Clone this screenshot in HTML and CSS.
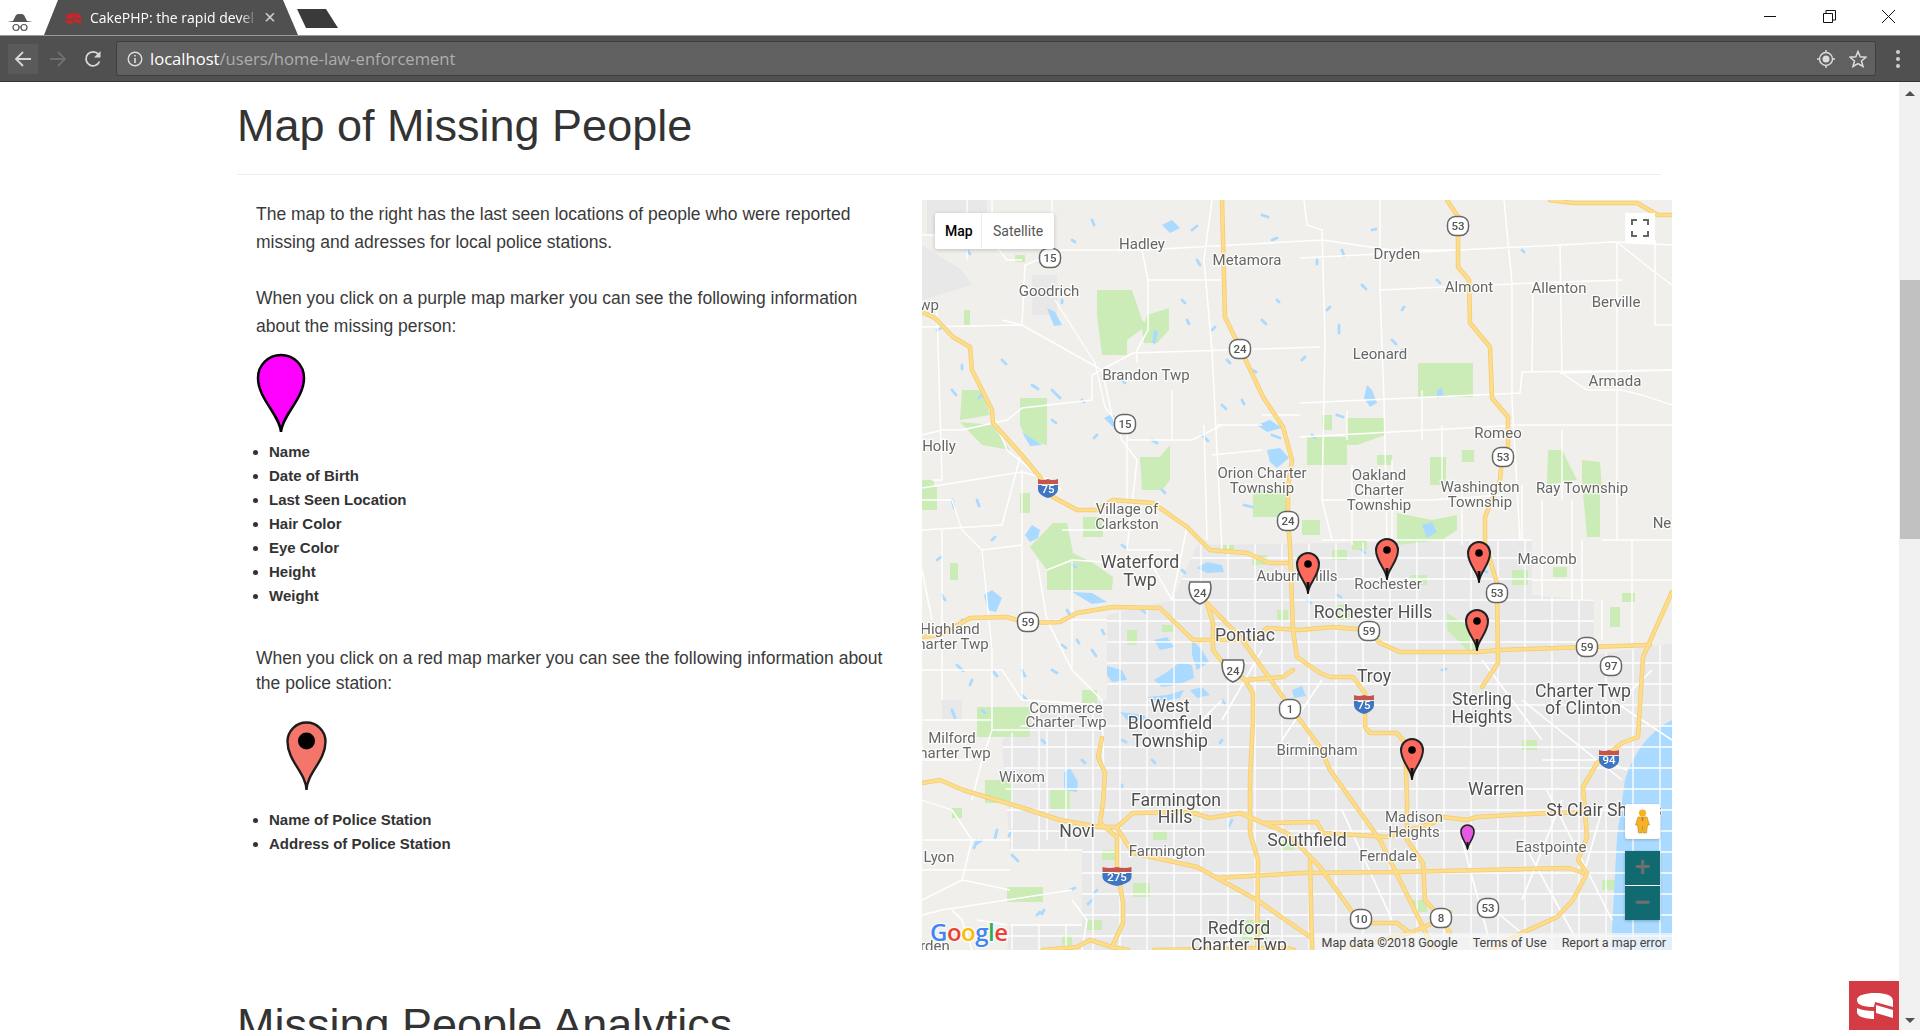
FILE: index.html
```html
<!DOCTYPE html>
<html lang="en">
<head>
  <meta charset="UTF-8" />
  <title>CakePHP: the rapid development php framework</title>
  <link rel="stylesheet" href="styles.css">
</head>
<body>

  <svg class="defs" width="0" height="0">
    <symbol id="cake" viewBox="0 0 50 49">
      <path fill="currentColor" d="M8 19C8 14 17 12 26 12C36 12 44 14 44 20L44 26L26 21L25 26C17 26 8 25 8 19Z"/>
      <path fill="currentColor" d="M27 24L44 29L44 37L27 32Z"/>
      <path fill="currentColor" d="M8 27C12 29 18 30 25 30L25 38C17 38 8 36 8 31Z"/>
    </symbol>
    <symbol id="pin-red" viewBox="0 0 41 70">
      <path fill="#f4756a" stroke="#1c1c1c" stroke-width="2.4" d="M20.5 69C20 52 1.5 40 1.5 20.5A19 19 0 0 1 39.5 20.5C39.5 40 21 52 20.5 69Z"/>
      <circle cx="20.5" cy="20" r="8.5" fill="#000"/>
    </symbol>
    <symbol id="pin-map" viewBox="0 0 24 42">
      <path fill="#fb6a5c" stroke="#222" stroke-width="2" d="M12 41C11.5 31 1 24 1 12A11 11 0 0 1 23 12C23 24 12.500 31 12 41Z"/>
      <path fill="#111" d="M10.500 30L13.500 30L12.800 42L11.200 42Z"/>
      <circle cx="12" cy="12" r="3.800" fill="#000"/>
    </symbol>
    <symbol id="pin-purple" viewBox="0 0 15 26">
      <path fill="#e558e0" stroke="#222" stroke-width="1.600" d="M7.500 25C7 19 1 15 1 7.500A6.500 6.500 0 0 1 14 7.500C14 15 8 19 7.500 25Z"/>
      <path fill="#111" d="M6.500 18L8.500 18L8 26L7 26Z"/>
    </symbol>
  </svg>

  <!-- browser bars -->
  <header class="tabstrip">
    <svg class="incognito" width="30" height="30" viewBox="0 0 30 30">
      <path fill="#555" d="M13 8L17 8L19 9L22 15L28 16L2 16L8 15L11 9Z"/>
      <circle cx="11" cy="21.500" r="3" fill="none" stroke="#555" stroke-width="1.200"/>
      <circle cx="19" cy="21.500" r="3" fill="none" stroke="#555" stroke-width="1.200"/>
      <path stroke="#555" stroke-width="1.200" d="M14 21L16 21"/>
    </svg>
    <div class="tab">
      <svg class="favicon" width="22" height="21"><use href="#cake"/></svg>
      <span class="tab-title">CakePHP: the rapid devel</span>
      <span class="tab-close">×</span>
    </div>
    <div class="newtab"></div>
    <div class="winbtns">
      <svg width="13" height="13" viewBox="0 0 13 13"><path stroke="#111" d="M0 6.500H12"/></svg>
      <svg width="13" height="13" viewBox="0 0 13 13"><path fill="none" stroke="#111" d="M.5 3.500H9.500V12.500H.5ZM3 3.500V.5H12.500V10H9.500"/></svg>
      <svg width="13" height="13" viewBox="0 0 13 13"><path stroke="#111" d="M0 0L13 13M13 0L0 13"/></svg>
    </div>
  </header>

  <nav class="toolbar">
    <div class="navbtn navbtn-on">
      <svg width="18" height="18" viewBox="0 0 18 18"><path fill="none" stroke="#d8d8d8" stroke-width="1.800" d="M17 9H2M9 2L2 9L9 16"/></svg>
    </div>
    <div class="navbtn">
      <svg width="18" height="18" viewBox="0 0 18 18"><path fill="none" stroke="#6f6f6f" stroke-width="1.800" d="M1 9H16M9 2L16 9L9 16"/></svg>
    </div>
    <div class="navbtn">
      <svg width="18" height="18" viewBox="0 0 18 18"><path fill="none" stroke="#d8d8d8" stroke-width="1.800" d="M15.500 11.500A7 7 0 1 1 14.500 4.500"/><path fill="#d8d8d8" d="M16.500 1V7.500H10Z"/></svg>
    </div>
    <div class="addressbar">
      <svg width="16" height="16" viewBox="0 0 16 16"><circle cx="8" cy="8" r="6.800" fill="none" stroke="#ddd" stroke-width="1.400"/><path stroke="#ddd" stroke-width="1.600" d="M8 7V12M8 4V5.600"/></svg>
      <span class="url"><span class="url-host">localhost</span>/users/home-law-enforcement</span>
      <svg class="addr-target" width="18" height="18" viewBox="0 0 18 18"><circle cx="9" cy="9" r="6.500" fill="none" stroke="#ddd" stroke-width="1.400"/><circle cx="9" cy="9" r="3.500" fill="#ddd"/><path stroke="#ddd" stroke-width="1.400" d="M9 0V2.500M9 15.500V18M0 9H2.500M15.500 9H18"/></svg>
      <svg class="addr-star" width="18" height="18" viewBox="0 0 18 18"><path fill="none" stroke="#ddd" stroke-width="1.500" d="M9 1.500L11.200 6.800L17 7.200L12.500 11L14 16.500L9 13.500L4 16.500L5.500 11L1 7.200L6.800 6.800Z"/></svg>
    </div>
    <div class="dots"><i></i><i></i><i></i></div>
  </nav>

  <div class="viewport">
    <main class="page">
      <h1 class="heading">Map of Missing People</h1>

      <div class="map-row">
        <section class="intro">
          <p class="intro-text">The map to the right has the last seen locations of people who were reported missing and adresses for local police stations.</p>
          <p class="intro-text">When you click on a purple map marker you can see the following information about the missing person:</p>
          <svg class="big-pin" width="50" height="80" viewBox="0 0 50 80">
            <path fill="#f0f" stroke="#000" stroke-width="2.500" d="M25 79C24 62 2 46 2 25A23 23 0 0 1 48 25C48 46 26 62 25 79Z"/>
          </svg>
          <ul class="fields">
            <li>Name</li>
            <li>Date of Birth</li>
            <li>Last Seen Location</li>
            <li>Hair Color</li>
            <li>Eye Color</li>
            <li>Height</li>
            <li>Weight</li>
          </ul>
          <p class="intro-text intro-police">When you click on a red map marker you can see the following information about the police station:</p>
          <svg class="red-pin" width="41" height="70"><use href="#pin-red"/></svg>
          <ul class="fields">
            <li>Name of Police Station</li>
            <li>Address of Police Station</li>
          </ul>
        </section>

        <div class="map">
          <svg class="map-canvas" width="750" height="750" viewBox="0 0 750 750">
            <defs>
              <pattern id="streets" width="27" height="21" patternUnits="userSpaceOnUse">
                <path d="M0 1H27M9 0V21" stroke="#fff" stroke-width="1.300" fill="none"/>
              </pattern>
              <clipPath id="urban-clip"><path d="M275 345L610 340L610 395L672 400L672 455L750 443L750 750L85 750L88 725L160 725L160 650L88 650L85 610L80 540L120 510L185 500L185 415L250 400Z"/></clipPath>
              <g id="st"><rect x="-10.500" y="-9.500" width="21" height="19" rx="8" fill="#fff" stroke="#666" stroke-width="1.500"/></g>
              <g id="us"><path fill="#fff" stroke="#666" stroke-width="1.500" d="M-10 -11H10L11 -7C11 2 8 8 0 11C-8 8 -11 2 -11 -7Z"/></g>
              <g id="i">
                <path fill="#c4544e" d="M-10 -8Q-5 -6 0 -8Q5 -6 10 -8V-3H-10Z"/>
                <path fill="#3f76c4" d="M-10 -2H10V2C10 7 4 10 0 11C-4 10 -10 7 -10 2Z"/>
              </g>
              <g id="hw" fill="none" stroke-linejoin="round" stroke-linecap="round">
                <path d="M0 112L13 118L31 137L48 147L50 170L70 210L71 223L98 253L118 277L131 297L155 310L175 310L191 300L231 303L265 327L288 350L325 353L348 363L365 363"/>
                <path d="M300 0L303 117L318 148L341 197L361 227L370 260L366 287L366 320L368 347L371 430L375 457L398 473L408 477L431 477L443 493L443 527L448 533L475 533L483 543L485 600L485 640L501 663L503 700L518 717L528 733"/>
                <path d="M525 0L536 17L536 67L547 80L548 123L568 147L570 198L586 217L586 247L580 257L578 280L563 317L563 343L575 383L576 463L560 487"/>
                <path d="M628 0L651 3L715 3L736 15L750 15"/>
                <path d="M0 437L18 435L48 418L85 417L105 423L138 422L155 413L191 407L238 408L271 440L331 440L345 428L378 430L411 427L445 430L458 443L478 452L555 452L578 450L665 447L728 445"/>
                <path d="M750 392L721 457L716 537L700 543L675 563L661 587L665 637L656 660L665 673L651 700L635 717L591 737L570 750"/>
                <path d="M378 673L478 672L647 668L661 673"/>
                <path d="M295 678L378 673"/>
                <path d="M521 617L545 620L555 617L625 613L663 612"/>
                <path d="M285 403L318 437L361 497L398 547L408 570L458 640L501 727L512 750"/>
                <path d="M285 403L291 423L291 450L301 463L323 480L331 493L331 520L328 580L328 633L336 660L335 750"/>
                <path d="M323 480L361 477L371 470"/>
                <path d="M0 583L18 580L41 590L98 607L138 620L178 627L195 627L211 613L268 612L288 618L318 613L341 623L395 622L401 633L465 637L511 623L521 617"/>
                <path d="M180 538L176 557L183 573L181 603L178 623L195 637L195 667L201 703L201 723L190 747"/>
                <path d="M195 628L211 653L275 667L335 700L388 737"/>
                <path d="M318 613L365 633L398 667L431 713"/>
                <path d="M388 660L390 750"/>
                <path d="M121 750L155 747L168 740L190 747L206 750"/>
                <path d="M232 750L365 748L372 750"/>
                <path d="M448 723L475 723L488 733L511 723L528 712"/>
                <path d="M420 750L488 733"/>
              </g>
            </defs>

            <rect width="750" height="750" fill="#f0efeb"/>
            <path fill="#e8e8e8" d="M275 345L610 340L610 395L672 400L672 455L750 443L750 750L85 750L88 725L160 725L160 650L88 650L85 610L80 540L120 510L185 500L185 415L250 400Z"/>
            <path fill="#e8e8e8" d="M5 0H65V35H5ZM0 45L40 70L50 85L0 100ZM110 75H135V115H110ZM20 500H40V520H20Z"/>

            <!-- parks -->
            <g fill="#cbebb7">
              <path d="M175 90L210 90L220 120L225 125L205 140L205 155L180 155L175 115Z"/>
              <path d="M225 115L247 108L247 130L235 143L222 143L220 130Z"/>
              <path d="M98 198L125 198L125 245L105 240L98 225Z"/>
              <path d="M40 190L60 190L68 215L38 220Z"/>
              <path d="M38 222L70 225L88 250L60 245Z"/>
              <path d="M218 257L238 257L248 245L248 280L240 290L220 290Z"/>
              <path d="M42 110H48V125H42ZM0 280H12V295H0ZM93 55H103V62H93Z"/>
              <path d="M496 163H551V197H496Z"/>
              <path d="M385 237L425 237L425 265L385 265Z"/>
              <path d="M425 218L463 218L463 235L435 245L425 245Z"/>
              <path d="M508 257H524V285H508ZM626 250L640 250L655 280L625 285ZM661 293H678V337H665Z"/>
              <path d="M108 347L131 323L145 323L151 353L171 363L191 377L190 390L125 390L125 370Z"/>
              <path d="M161 317H181V337H161ZM331 290H365V317H331ZM28 363H36V380H28ZM98 293H108V313H98ZM0 287H15V310H0Z"/>
              <path d="M55 507H108V537H80L55 537Z"/>
              <path d="M475 313L510 320L535 315L535 330L520 340L475 345Z"/>
              <path d="M688 407H698V427H688ZM700 393H713V402H700ZM631 367H645V377H631ZM525 413L545 425L555 450L545 450L525 430Z"/>
              <path d="M63 580H91V603H63ZM128 590H148V610H128ZM85 687H121V702H85ZM30 608H40V618H30ZM211 683H228V697H211ZM231 630H245V640H231Z"/>
              <path d="M413 405H428V420H413ZM488 375H505V385H488ZM590 370H606V385H590ZM430 340H445V350H430ZM600 540H615V550H600ZM360 640H373V650H360ZM490 700H505V712H490ZM320 720H345V740H320ZM180 650H195V660H180ZM165 720H180V730H165Z"/>
              <path d="M660 260L678 262L680 290L660 285ZM720 720H735V735H720ZM680 680H695V690H680ZM140 735H150V745H140Z"/>
              <path d="M380 320H398V335H380ZM410 350H425V360H410ZM355 410H366V420H355ZM330 355H345V365H330ZM300 345H312V352H300ZM240 425H252V432H240ZM205 430H215V445H205ZM160 490H175V503H160ZM540 250H552V262H540ZM455 255H470V265H455ZM400 215H410V230H400Z"/>
            </g>

            <!-- water -->
            <g fill="#aadaff">
              <path d="M750 520C730 530 712 550 703 580L695 637L690 730L690 750L750 750Z"/>
              <path d="M103 335L110 325L118 330L116 338L108 342Z"/>
              <path d="M62 395L70 390L80 398L74 412L66 410Z"/>
              <path d="M185 466L200 470L205 480L190 482L185 475Z"/>
              <path d="M232 480L245 472L258 462L270 465L272 478L255 485L240 487Z"/>
              <path d="M232 440L245 437L252 447L238 450Z"/>
              <path d="M270 440L280 450L287 462L275 470L270 455Z"/>
              <path d="M275 368L285 362L300 365L302 372L285 373Z"/>
              <path d="M150 392L170 393L185 402L170 404Z"/>
              <path d="M268 490L280 487L288 495L275 498Z"/>
              <path d="M225 497L245 495L262 490L258 498L235 502Z"/>
              <path d="M198 512L222 515L225 520L205 520Z"/>
              <path d="M142 572L148 568L156 582L155 592L142 590Z"/>
              <path d="M345 250L358 248L367 258L355 268L348 262Z"/>
              <path d="M500 325L510 322L515 332L505 338Z"/>
              <path d="M445 185L450 190L455 203L448 207L442 198Z"/>
              <path d="M125 108L133 112L140 125L132 126Z"/>
              <path d="M240 25L250 20L258 28L248 33Z"/>
              <path d="M232 130L236 132L233 145L230 142Z"/>
              <path d="M182 218L190 214L198 222L192 228Z"/>
              <path d="M335 225L348 220L360 228L345 232Z"/>
              <path d="M100 232L112 240L120 245L108 246Z"/>
              <path d="M370 490L380 486L384 496L372 498Z"/>
              <path d="M515 190L520 188L522 196L515 198Z"/>
            </g>
            <path fill="none" stroke="#aadaff" stroke-width="2.800" stroke-linecap="round" d="M170 20l2 5M270 30l5 -4M275 60l3 5M340 15l6 2M380 160l3 -3M405 110l3 -3M417 125l0 8M440 85l4 4M470 140l4 4M480 150l2 6M40 165l0 4M30 190l4 5M15 130l4 -2M60 195l-3 3M80 160l4 4M110 185l6 4M130 190l8 8M140 100l0 3M200 180l3 3M160 200l2 2M130 220l4 3M175 235l-3 3M230 240l5 3M280 235l6 6M300 205l4 4M320 200l2 4M350 235l8 3M340 120l4 4M355 100l2 2M395 60l0 4M415 215l6 2M390 235l3 3M30 300l2 8M55 300l2 6M70 340l3 -3M15 360l4 -3M20 395l3 5M40 420l0 4M35 465l6 6M70 470l5 6M100 470l3 6M100 495l4 4M30 510l3 8M130 470l5 3M170 450l4 6M155 440l2 3M145 410l3 5M150 365l4 2M130 420l3 3M220 410l4 3M200 345l4 3M260 370l3 3M322 305l8 2M385 400l4 3M415 395l4 2M440 350l3 3M560 370l5 2M552 450l3 3M640 650l5 3M90 630l-3 6M75 630l-2 8M60 640l-6 4M55 640l-3 8M90 655l6 6M115 715l3 -3M122 710l-2 4M148 690l5 -2M170 700l-4 4M175 690l-3 3M200 585l0 3M310 620l-3 6M520 470l4 -1M240 290l3 3M45 50l3 4M90 20l2 5M150 40l3 2M260 100l3 3M265 120l2 4M290 130l3 -3M305 160l3 3M330 170l4 2M350 40l5 -2M420 50l2 6M450 30l4 -1M480 110l2 -3M515 80l3 3M600 50l2 2M140 445l4 3M180 430l2 4M50 480l-2 5M60 510l3 3M120 540l3 3M200 540l4 2M160 560l3 3M230 560l3 3M270 540l4 -2M300 500l3 4M300 540l-2 3"/>

            <!-- streets -->
            <rect width="750" height="750" fill="url(#streets)" clip-path="url(#urban-clip)"/>
            <path fill="none" stroke="#fff" stroke-width="1.500" d="M0 127L100 125L103 65L140 50L220 50L400 40L470 50L540 50M220 50L226 80L226 130L215 150L215 163M290 0L282 60L290 150L300 350M382 0L385 25L400 30L403 140L400 300L410 340M458 0L458 90L462 200L465 340M378 58L638 45L691 42L750 45M458 90L611 83L700 80M638 45L640 173M582 0L590 83L590 200L598 340M638 173L750 170M611 83L610 172M695 42L695 340M733 40L733 125L750 125M378 203L598 193L600 172L750 170M378 237L598 225L750 225M211 153L398 147M211 153L170 175L170 200L100 208L85 220L40 230L20 230L0 235M0 330L80 325L100 250M80 120L100 125L180 170L190 215L200 240L215 260L205 350M226 80L300 80M205 240L270 240L300 225M282 225L285 340M290 255L340 250M0 288L100 272L130 280M15 110L20 280L10 280M50 165L85 250L118 277L140 290M400 300L510 300L580 295M0 370L10 420M0 470L80 470L100 500L180 505M70 450L70 530L180 530M115 360L125 420L150 470L180 500M250 400L230 365L150 360L125 370M265 327L250 400M180 500L182 580M70 530L60 560L50 600M0 640L88 640M30 610L50 640L40 680L88 690M40 680L0 700M150 690L85 700L20 710L0 715M150 700L165 720L160 750M30 710L40 720L50 750"/>
            <path fill="none" stroke="#fff" stroke-width="1.300" d="M45 0V60M70 0V40M130 0V30M0 35H65M65 35L85 60L100 60M133 100L173 163L183 207L200 230M205 225V300M250 190V240M295 225H340M340 215H378M695 42L730 70L750 85M640 173L665 190L700 190L720 195L750 205M640 230V300M520 225V285M500 190V240M425 210V240M0 300H30L40 330L60 350L100 345M20 330V500M60 350L70 450M125 420H185M100 500L100 270M150 360V470M0 520H70M0 560H50M0 600L30 610M125 530V640M140 330H210M205 350L250 350M400 340H610M470 260L470 345M430 265V345M540 285V345M600 285V340M620 300V400M650 300V400M680 340H750M710 340V445M680 400V440M610 380H750M660 340V400M0 670H88M55 720L85 725M88 650L160 650M88 725H160"/>
            <path fill="none" stroke="#fff" stroke-width="1.600" d="M625 590L690 720M600 640L660 750M640 600L600 700M680 610L660 680M560 700L620 750M700 500L730 470M690 500L750 540M600 500L700 580M560 460L620 540M620 560L680 560L705 570M540 640L570 750M420 610L470 720M300 500L260 540M340 450L300 520M400 480L360 540"/>

            <use href="#hw" class="hw-case"/>
            <use href="#hw" class="hw-fill"/>

            <!-- road shields -->
            <g class="shield" transform="translate(128 58)"><use href="#st"/><text y="4">15</text></g>
            <g class="shield" transform="translate(203 224)"><use href="#st"/><text y="4">15</text></g>
            <g class="shield" transform="translate(318 149)"><use href="#st"/><text y="4">24</text></g>
            <g class="shield" transform="translate(536 26)"><use href="#st"/><text y="4">53</text></g>
            <g class="shield" transform="translate(581 257)"><use href="#st"/><text y="4">53</text></g>
            <g class="shield" transform="translate(575 393)"><use href="#st"/><text y="4">53</text></g>
            <g class="shield" transform="translate(566 708)"><use href="#st"/><text y="4">53</text></g>
            <g class="shield" transform="translate(366 321)"><use href="#st"/><text y="4">24</text></g>
            <g class="shield" transform="translate(278 393)"><use href="#us"/><text y="4">24</text></g>
            <g class="shield" transform="translate(311 471)"><use href="#us"/><text y="4">24</text></g>
            <g class="shield" transform="translate(106 422)"><use href="#st"/><text y="4">59</text></g>
            <g class="shield" transform="translate(447 431)"><use href="#st"/><text y="4">59</text></g>
            <g class="shield" transform="translate(665 447)"><use href="#st"/><text y="4">59</text></g>
            <g class="shield" transform="translate(689 466)"><use href="#st"/><text y="4">97</text></g>
            <g class="shield" transform="translate(368 509)"><use href="#st"/><text y="4">1</text></g>
            <g class="shield" transform="translate(439 719)"><use href="#st"/><text y="4">10</text></g>
            <g class="shield" transform="translate(519 718)"><use href="#st"/><text y="4">8</text></g>
            <g class="shield shield-i" transform="translate(126 287)"><use href="#i"/><text y="6">75</text></g>
            <g class="shield shield-i" transform="translate(442 503)"><use href="#i"/><text y="6">75</text></g>
            <g class="shield shield-i" transform="translate(687 558)"><use href="#i"/><text y="6">94</text></g>
            <g class="shield shield-i" transform="translate(195 675)"><use href="#i" transform="scale(1.450 1)"/><text y="6">275</text></g>

            <!-- place names -->
            <g class="place">
              <text x="220" y="49">Hadley</text>
              <text x="325" y="65">Metamora</text>
              <text x="127" y="96">Goodrich</text>
              <text x="7" y="110">wp</text>
              <text x="224" y="180">Brandon Twp</text>
              <text x="17" y="251">Holly</text>
              <text x="340" y="278">Orion Charter</text>
              <text x="340" y="293">Township</text>
              <text x="475" y="59">Dryden</text>
              <text x="547" y="92">Almont</text>
              <text x="637" y="93">Allenton</text>
              <text x="694" y="107">Berville</text>
              <text x="458" y="159">Leonard</text>
              <text x="693" y="186">Armada</text>
              <text x="576" y="238">Romeo</text>
              <text x="457" y="280">Oakland</text>
              <text x="457" y="295">Charter</text>
              <text x="457" y="310">Township</text>
              <text x="558" y="292">Washington</text>
              <text x="558" y="307">Township</text>
              <text x="660" y="293">Ray Township</text>
              <text x="740" y="328">Ne</text>
              <text x="205" y="314">Village of</text>
              <text x="205" y="329">Clarkston</text>
              <text x="375" y="381">Auburn Hills</text>
              <text x="466" y="389">Rochester</text>
              <text x="625" y="364">Macomb</text>
              <text x="28" y="434">Highland</text>
              <text x="31" y="449">harter Twp</text>
              <text x="144" y="513">Commerce</text>
              <text x="144" y="527">Charter Twp</text>
              <text x="30" y="543">Milford</text>
              <text x="33" y="558">harter Twp</text>
              <text x="395" y="555">Birmingham</text>
              <text x="100" y="582">Wixom</text>
              <text x="245" y="656">Farmington</text>
              <text x="17" y="662">Lyon</text>
              <text x="492" y="622">Madison</text>
              <text x="492" y="637">Heights</text>
              <text x="466" y="661">Ferndale</text>
              <text x="629" y="652">Eastpointe</text>
              <text x="13" y="751">rden</text>
            </g>
            <g class="place place-big">
              <text x="218" y="368">Waterford</text>
              <text x="218" y="386">Twp</text>
              <text x="323" y="441">Pontiac</text>
              <text x="451" y="418">Rochester Hills</text>
              <text x="452" y="482">Troy</text>
              <text x="560" y="505">Sterling</text>
              <text x="560" y="523">Heights</text>
              <text x="661" y="497">Charter Twp</text>
              <text x="661" y="514">of Clinton</text>
              <text x="248" y="512">West</text>
              <text x="248" y="529">Bloomfield</text>
              <text x="248" y="547">Township</text>
              <text x="254" y="606">Farmington</text>
              <text x="253" y="623">Hills</text>
              <text x="155" y="637">Novi</text>
              <text x="385" y="646">Southfield</text>
              <text x="317" y="734">Redford</text>
              <text x="317" y="751">Charter Twp</text>
              <text x="574" y="595">Warren</text>
              <text x="682" y="616">St Clair Shores</text>
            </g>

            <!-- markers -->
            <use href="#pin-map" x="374" y="352" width="24" height="42"/>
            <use href="#pin-map" x="453" y="338" width="24" height="42"/>
            <use href="#pin-map" x="545" y="341" width="24" height="42"/>
            <use href="#pin-map" x="543" y="409" width="24" height="42"/>
            <use href="#pin-map" x="478" y="538" width="24" height="42"/>
            <use href="#pin-purple" x="538" y="624" width="15" height="26"/>
          </svg>

          <div class="maptype">
            <span class="maptype-btn maptype-on">Map</span>
            <span class="maptype-btn">Satellite</span>
          </div>
          <div class="fullscreen">
            <svg width="18" height="18" viewBox="0 0 18 18"><path fill="none" stroke="#666" stroke-width="2" d="M1 6V1H6M12 1H17V6M17 12V17H12M6 17H1V12"/></svg>
          </div>
          <div class="pegman">
            <svg width="15" height="25" viewBox="0 0 15 25">
              <circle cx="7.500" cy="4" r="3.600" fill="#f5b324"/>
              <path fill="#f5b324" stroke="#b98a2a" stroke-width=".6" d="M3 8H12L14.500 16H12.500L11.500 24H8L7.500 17L7 24H3.500L2.500 16H.5Z"/>
              <path fill="#e0672c" d="M7 8.500H8L8.500 11L7.500 12.500L6.500 11Z"/>
            </svg>
          </div>
          <div class="zoom">
            <span class="zoom-btn">+</span>
            <span class="zoom-btn">−</span>
          </div>
          <div class="google"><span class="g-blue">G</span><span class="g-red">o</span><span class="g-yellow">o</span><span class="g-blue">g</span><span class="g-green">l</span><span class="g-red">e</span></div>
          <div class="attribution">
            <span>Map data ©2018 Google</span>
            <span>Terms of Use</span>
            <span>Report a map error</span>
          </div>
        </div>
      </div>

      <h1 class="heading heading-next">Missing People Analytics</h1>
    </main>

    <div class="scrollbar">
      <span class="arrow-up"></span>
      <div class="thumb"></div>
      <span class="arrow-down"></span>
    </div>
    <div class="cake-toolbar">
      <svg width="50" height="49"><use href="#cake"/></svg>
    </div>
  </div>

</body>
</html>
```

FILE: styles.css
```css
* {
  box-sizing: border-box;
}

html, body {
  height: 100%;
}

body {
  margin: 0;
  overflow: hidden;
  display: flex;
  flex-direction: column;
  font-family: "Liberation Sans", Arial, sans-serif;
  color: #333;
  background-color: white;
}

.defs {
  position: absolute;
}

/* browser bars */
.tabstrip {
  height: 35px;
  flex: none;
  display: flex;
  background-color: white;
}

.incognito {
  margin: 6px 0 0 5px;
}

.tab {
  width: 254px;
  height: 35px;
  margin-left: 9px;
  padding: 0 0 0 18px;
  display: flex;
  align-items: center;
  background-color: #505050;
  color: white;
  clip-path: polygon(0 100%, 14px 0, 239px 0, 100% 100%);
}

.favicon {
  color: #c9252d;
  flex: none;
  margin-top: 1px;
}

.tab-title {
  width: 168px;
  margin-left: 6px;
  font-family: "Open Sans", sans-serif;
  font-size: 14px;
  white-space: nowrap;
  overflow: hidden;
  -webkit-mask-image: linear-gradient(to right, black 150px, transparent 168px);
  mask-image: linear-gradient(to right, black 150px, transparent 168px);
}

.tab-close {
  margin-left: 6px;
  font-size: 20px;
  color: #cfcfcf;
}

.newtab {
  width: 41px;
  height: 19px;
  margin: 9px 0 0 -1px;
  background-color: #3a3a3a;
  clip-path: polygon(0 0, 29px 0, 100% 100%, 9px 100%);
}

.winbtns {
  margin-left: auto;
  padding: 10px 25px 0 0;
  display: flex;
  gap: 46px;
  height: 24px;
}

.toolbar {
  height: 47px;
  flex: none;
  display: flex;
  align-items: center;
  background-color: #505050;
  border-top: 1px solid #9a9a9a;
  border-bottom: 1px solid #333;
}

.navbtn {
  width: 30px;
  height: 30px;
  margin-left: 8px;
  display: flex;
  align-items: center;
  justify-content: center;
}

.navbtn + .navbtn {
  margin-left: 5px;
}

.navbtn-on {
  background-color: #5a5a5a;
}

.addressbar {
  width: 1760px;
  height: 35px;
  margin-left: 8px;
  padding: 0 8px 0 10px;
  display: flex;
  align-items: center;
  background-color: #606060;
  border: 1px solid #3e3e3e;
  border-radius: 3px;
}

.url {
  margin-left: 7px;
  font-family: "Open Sans", sans-serif;
  font-size: 16.6px;
  color: #aeaeae;
}

.url-host {
  color: white;
}

.addr-target {
  margin-left: auto;
}

.addr-star {
  margin-left: 14px;
}

.dots {
  margin-left: 20px;
  display: flex;
  flex-direction: column;
  gap: 3px;
}

.dots i {
  width: 4px;
  height: 4px;
  border-radius: 50%;
  background-color: #d0d0d0;
}

/* page */
.viewport {
  flex: 1;
  min-height: 0;
  display: flex;
  overflow: hidden;
  position: relative;
}

.page {
  flex: 1;
  min-width: 0;
  padding: 0 238px 0 237px;
}

.heading {
  margin: 0;
  font-size: 45px;
  font-weight: normal;
  line-height: 50px;
  padding-top: 19px;
  padding-bottom: 23px;
  border-bottom: 1px solid #eee;
  color: #333;
}

.heading-next {
  margin-top: 31px;
  border-bottom: none;
}

.map-row {
  display: flex;
  margin-top: 25px;
}

.intro {
  width: 685px;
  flex: none;
  padding-left: 19px;
}

.intro-text {
  width: 640px;
  margin: 0 0 28px;
  font-size: 17.5px;
  line-height: 28px;
  color: #3a3a3a;
}

.big-pin {
  display: block;
  margin-top: -15px;
}

.fields {
  margin: 7px 0 0;
  padding: 0 0 0 13px;
  font-size: 15px;
  font-weight: bold;
  line-height: 24px;
}

.intro-police {
  margin: 38px 0 0;
  line-height: 25px;
}

.red-pin {
  display: block;
  margin: 25px 0 0 30px;
}

.red-pin + .fields {
  margin-top: 17px;
}

/* map */
.map {
  position: relative;
  width: 750px;
  height: 750px;
  flex: none;
  overflow: hidden;
}

.map-canvas {
  display: block;
  filter: blur(.35px);
  font-family: Roboto, sans-serif;
}

.hw-case {
  stroke: #f3cb72;
  stroke-width: 4.5px;
}

.hw-fill {
  stroke: #fddc8a;
  stroke-width: 3px;
}

.shield text {
  text-anchor: middle;
  font-size: 11.5px;
  font-weight: 500;
  fill: #555;
}

.shield-i text {
  fill: white;
}

.place text {
  text-anchor: middle;
  font-size: 15px;
  fill: #666;
  stroke: rgba(255, 255, 255, .8);
  stroke-width: 2.5px;
  paint-order: stroke;
}

.place-big text {
  font-size: 17.7px;
  fill: #505050;
}

.maptype {
  position: absolute;
  left: 13px;
  top: 13px;
  height: 36px;
  display: flex;
  background-color: white;
  border-radius: 2px;
  box-shadow: 0 1px 4px rgba(0, 0, 0, .2);
  font-family: Roboto, sans-serif;
  font-size: 14px;
}

.maptype-btn {
  padding: 0 11px;
  line-height: 36px;
  color: #565656;
}

.maptype-on {
  width: 47px;
  padding: 0 10px;
  color: black;
  font-weight: 500;
  border-right: 1px solid #eee;
}

.fullscreen {
  position: absolute;
  left: 703px;
  top: 13px;
  width: 30px;
  height: 30px;
  display: flex;
  align-items: center;
  justify-content: center;
  background-color: white;
}

.pegman {
  position: absolute;
  left: 703px;
  top: 604px;
  width: 35px;
  height: 35px;
  display: flex;
  align-items: center;
  justify-content: center;
  background-color: white;
  border-radius: 2px;
  box-shadow: 0 1px 3px rgba(0, 0, 0, .2);
}

.zoom {
  position: absolute;
  left: 703px;
  top: 651px;
  width: 35px;
  display: flex;
  flex-direction: column;
  gap: 1px;
  background-color: white;
  box-shadow: 0 1px 3px rgba(0, 0, 0, .25);
}

.zoom-btn {
  height: 34px;
  background-color: #116a70;
  color: #6e6e6e;
  font-family: "Liberation Sans", sans-serif;
  font-size: 27px;
  font-weight: bold;
  line-height: 33px;
  text-align: center;
}

.google {
  position: absolute;
  left: 8px;
  top: 715px;
  font-family: "Open Sans", sans-serif;
  font-size: 24px;
  font-weight: 600;
  letter-spacing: -.5px;
  -webkit-text-stroke: 2.5px rgba(255, 255, 255, .75);
  paint-order: stroke fill;
}

.g-blue { color: #4285f4; }
.g-red { color: #ea4335; }
.g-yellow { color: #fbbc05; }
.g-green { color: #34a853; }

.attribution {
  position: absolute;
  right: 0;
  bottom: 0;
  width: 357px;
  height: 17px;
  padding: 0 6px;
  display: flex;
  justify-content: flex-end;
  gap: 15px;
  background-color: rgba(245, 245, 245, .75);
  font-family: Roboto, sans-serif;
  font-size: 12.5px;
  line-height: 19px;
  color: #444;
}

/* scrollbar and floating cake button */
.scrollbar {
  width: 21px;
  flex: none;
  position: relative;
  background-color: #f1f1f1;
}

.thumb {
  position: absolute;
  left: 1px;
  right: 0;
  top: 198px;
  height: 259px;
  background-color: #c1c1c1;
}

.arrow-up, .arrow-down {
  position: absolute;
  left: 6px;
  width: 0;
  height: 0;
  border-left: 5px solid transparent;
  border-right: 5px solid transparent;
}

.arrow-up {
  top: 9px;
  border-bottom: 5px solid #505050;
}

.arrow-down {
  bottom: 7px;
  border-top: 5px solid #505050;
}

.cake-toolbar {
  position: absolute;
  right: 21px;
  bottom: 0;
  width: 50px;
  height: 49px;
  color: white;
  background-color: #d33c44;
}

.cake-toolbar svg {
  display: block;
}
```
